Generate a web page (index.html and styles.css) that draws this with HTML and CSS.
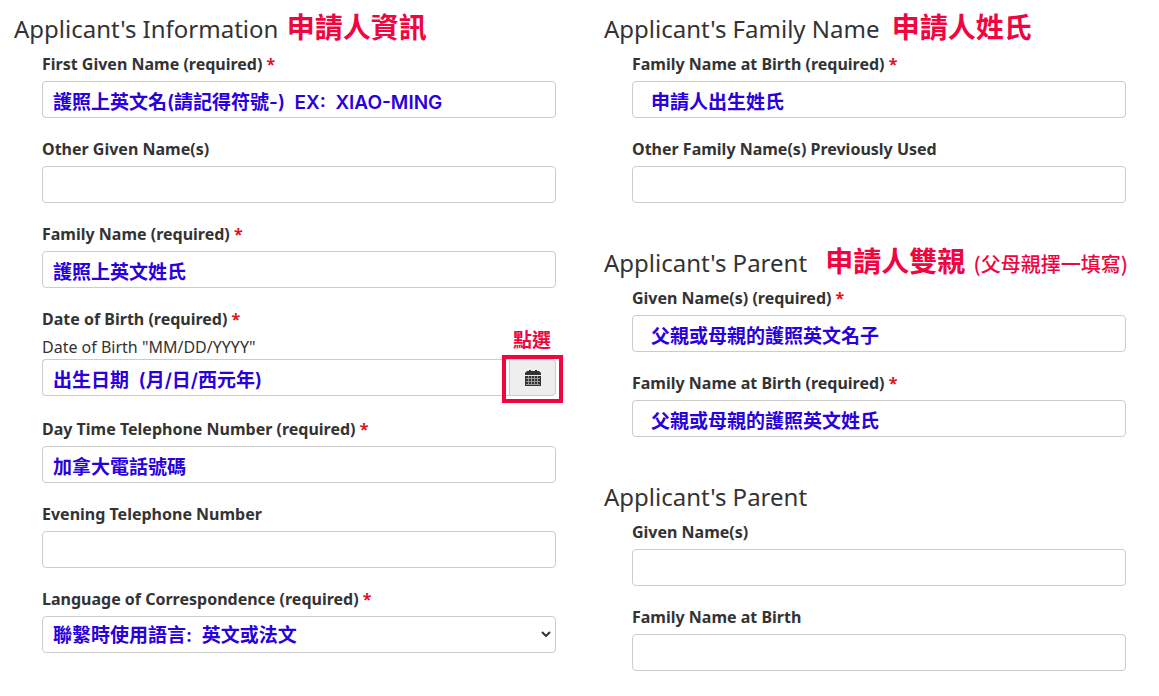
FILE: index.html
```html
<!DOCTYPE html>
<html lang="en">
<head>
<meta charset="utf-8">
<meta name="viewport" content="width=device-width, initial-scale=1">
<title>Applicant's Information</title>
<link rel="stylesheet" href="styles.css">
</head>
<body>
<form class="form">
  <div class="column">
    <section class="section">
      <h2 class="heading">Applicant's Information <span class="note" lang="zh-Hant">申請人資訊</span></h2>
      <div class="field">
        <label class="label" for="first">First Given Name (required) <span class="star">*</span></label>
        <input class="control" id="first" type="text" value="護照上英文名(請記得符號-)  EX:  XIAO-MING">
      </div>
      <div class="field">
        <label class="label" for="other">Other Given Name(s)</label>
        <input class="control" id="other" type="text">
      </div>
      <div class="field">
        <label class="label" for="family">Family Name (required) <span class="star">*</span></label>
        <input class="control" id="family" type="text" value="護照上英文姓氏">
      </div>
      <div class="field field-date">
        <label class="label" for="dob">Date of Birth (required) <span class="star">*</span></label>
        <span class="hint" id="dob-hint">Date of Birth "MM/DD/YYYY"</span>
        <div class="date-group">
          <input class="control date-input" id="dob" type="text" aria-describedby="dob-hint" value="出生日期  (月/日/西元年)">
          <button class="date-button" type="button" aria-label="Choose date">
            <svg class="calendar" viewBox="0 0 16 16" aria-hidden="true">
              <path fill="#333" d="M2 1h2V0h2v1h4V0h2v1h2l2 2v2H0V3zM0 6h16v10H0z"/>
              <path stroke="#999" stroke-width="1" d="M1 8.5h14M1 11.5h14M1 14.5h14M3.5 6v9M6.5 6v9M9.5 6v9M12.5 6v9"/>
            </svg>
          </button>
          <span class="callout" lang="zh-Hant">點選</span>
          <span class="frame"></span>
        </div>
      </div>
      <div class="field">
        <label class="label" for="day">Day Time Telephone Number (required) <span class="star">*</span></label>
        <input class="control" id="day" type="text" value="加拿大電話號碼">
      </div>
      <div class="field">
        <label class="label" for="evening">Evening Telephone Number</label>
        <input class="control" id="evening" type="text">
      </div>
      <div class="field">
        <label class="label" for="language">Language of Correspondence (required) <span class="star">*</span></label>
        <div class="select-wrap">
          <select class="control select" id="language"><option>聯繫時使用語言:&nbsp; 英文或法文</option></select>
          <svg class="chevron" viewBox="0 0 10 6" aria-hidden="true"><path d="M1 1l4 4 4-4" fill="none" stroke="#333" stroke-width="2"/></svg>
        </div>
      </div>
    </section>
  </div>
  <div class="column">
    <section class="section">
      <h2 class="heading">Applicant's Family Name <span class="note note-spaced" lang="zh-Hant">申請人姓氏</span></h2>
      <div class="field">
        <label class="label" for="birth">Family Name at Birth (required) <span class="star">*</span></label>
        <input class="control control-inset" id="birth" type="text" value="申請人出生姓氏">
      </div>
      <div class="field">
        <label class="label" for="previous">Other Family Name(s) Previously Used</label>
        <input class="control" id="previous" type="text">
      </div>
    </section>
    <section class="section">
      <h2 class="heading">Applicant's Parent <span class="note note-wide" lang="zh-Hant">申請人雙親</span> <span class="note note-small" lang="zh-Hant">(父母親擇一填寫)</span></h2>
      <div class="field">
        <label class="label" for="p1-given">Given Name(s) (required) <span class="star">*</span></label>
        <input class="control control-inset" id="p1-given" type="text" value="父親或母親的護照英文名子">
      </div>
      <div class="field">
        <label class="label" for="p1-family">Family Name at Birth (required) <span class="star">*</span></label>
        <input class="control control-inset" id="p1-family" type="text" value="父親或母親的護照英文姓氏">
      </div>
    </section>
    <section class="section">
      <h2 class="heading">Applicant's Parent</h2>
      <div class="field">
        <label class="label" for="p2-given">Given Name(s)</label>
        <input class="control" id="p2-given" type="text">
      </div>
      <div class="field">
        <label class="label" for="p2-family">Family Name at Birth</label>
        <input class="control" id="p2-family" type="text">
      </div>
    </section>
  </div>
</form>
</body>
</html>
```
FILE: styles.css
```css
* { box-sizing: border-box; }

body {
  margin: 0;
  background: #fff;
  color: #333;
  font: 16px/24px "Noto Sans", "Noto Sans CJK TC", sans-serif;
}

.form {
  display: grid;
  grid-template-columns: 542fr 522fr;
  gap: 48px;
  padding: 12px 33px 0 14px;
}

.column {
  display: flex;
  flex-direction: column;
  gap: 43px;
  min-width: 0;
}

.section {
  display: flex;
  flex-direction: column;
  gap: 19px;
}

.heading {
  margin: 0 0 -13px;
  font-size: 24px;
  font-weight: 400;
  line-height: 34px;
  white-space: nowrap;
}

.note {
  margin-left: 2px;
  color: #f00541;
  font: 700 28px/28px "Noto Sans CJK TC", sans-serif;
}

.note-spaced { margin-left: 6px; }
.note-wide { margin-left: 12px; }
.note-small { font-size: 20px; font-weight: 500; }

.field {
  display: flex;
  flex-direction: column;
  padding-left: 28px;
}

.field-date { margin-bottom: 2px; }

.label {
  margin-bottom: 5px;
  font-weight: 700;
}

.field-date .label { margin-bottom: 4px; }

.star { color: #e0101f; }

.hint { line-height: 24px; }

.control {
  width: 100%;
  height: 37px;
  padding: 2px 10px 0;
  border: 1px solid #ccc;
  border-radius: 4px;
  background: #fff;
  color: #2a00dc;
  font: 600 19px/28px Inter, "Noto Sans CJK TC", sans-serif;
}

.control-inset { padding-left: 18px; }

.select-wrap { position: relative; }

.select {
  display: block;
  appearance: none;
}

.chevron {
  position: absolute;
  top: 15px;
  right: 5px;
  width: 10px;
  height: 6px;
  pointer-events: none;
}

.date-group {
  display: flex;
  position: relative;
}

.date-input {
  flex: 1;
  min-width: 0;
  border-right: 0;
  border-radius: 4px 0 0 4px;
}

.date-button {
  display: flex;
  align-items: center;
  justify-content: center;
  width: 47px;
  padding: 0;
  border: 1px solid #ccc;
  border-radius: 0 4px 4px 0;
  background: #eee;
}

.calendar { width: 16px; height: 16px; }

.frame {
  position: absolute;
  top: -4px;
  right: -7px;
  width: 61px;
  height: 48px;
  border: 4px solid #f00541;
  pointer-events: none;
}

.callout {
  position: absolute;
  top: -34px;
  right: 5px;
  color: #f00541;
  font: 700 19px/28px "Noto Sans CJK TC", sans-serif;
}
```
